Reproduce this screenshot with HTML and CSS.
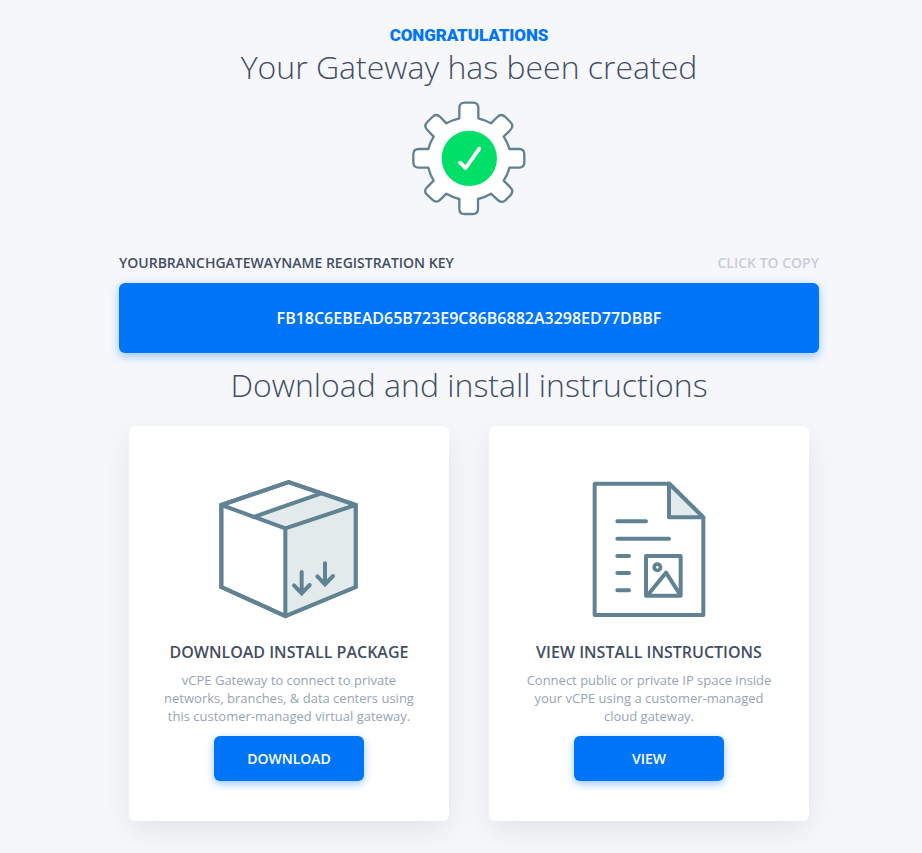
FILE: index.html
```html
<!DOCTYPE html>
<html lang="en">
<head>
<meta charset="utf-8">
<title>Gateway created</title>
<link rel="stylesheet" href="styles.css">
</head>
<body>
<main class="page">
  <p class="eyebrow">CONGRATULATIONS</p>
  <h1 class="title">Your Gateway has been created</h1>
  <svg class="gear" viewBox="0 0 390 375" aria-hidden="true">
    <path d="M166 70 V39 Q166 23 182 23 H207 Q223 23 223 39 V70 Q243 75 261 85 L280 66 Q292 54 304 66 L319 81 Q331 93 319 105 L299 125 Q311 142 316 162 H345 Q361 162 361 178 V202 Q361 218 345 218 H316 Q311 239 299 257 L319 277 Q331 289 319 301 L304 316 Q292 326 280 314 L261 296 Q243 307 222 312 V341 Q222 357 206 357 H182 Q166 357 166 341 V312 Q146 307 127 296 L109 314 Q97 326 85 314 L69 299 Q58 289 69 277 L89 257 Q78 239 73 218 H44 Q28 218 28 202 V178 Q28 162 44 162 H73 Q78 142 89 125 L70 105 Q58 93 70 81 L85 66 Q97 54 109 66 L127 85 Q145 75 166 70 Z" fill="#fff" stroke="#608292" stroke-width="7" stroke-linejoin="round"/>
    <circle cx="196" cy="190" r="83" fill="#00df67"/>
    <path d="M168 203 L185 219 L226 161" fill="none" stroke="#fff" stroke-width="11.5" stroke-linecap="round" stroke-linejoin="round"/>
  </svg>
  <div class="key-head">
    <span>YOURBRANCHGATEWAYNAME REGISTRATION KEY</span>
    <span class="copy">CLICK TO COPY</span>
  </div>
  <div class="key">FB18C6EBEAD65B723E9C86B6882A3298ED77DBBF</div>
  <h2 class="title subtitle">Download and install instructions</h2>
  <div class="cards">
    <section class="card">
      <svg class="art" viewBox="-3 0 480 465" aria-hidden="true">
        <g stroke="#608292" stroke-width="12" stroke-linejoin="miter" stroke-linecap="round">
          <path d="M34 105 L236 36 L437 105 V351 L226 438 L34 351 Z" fill="#fff"/>
          <path d="M130 141 L334 70 L437 105 V351 L226 438 V175 Z" fill="#e3eaeb" stroke="none"/>
          <path d="M34 105 L236 36 L437 105 V351 L226 438 L34 351 Z M34 105 L226 175 L437 105 M226 175 V438 M130 141 L334 70" fill="none"/>
          <path d="M275 306 V370 M252 346 L275 370 L299 345 M345 280 V343 M322 319 L345 343 L369 318" fill="none"/>
        </g>
      </svg>
      <h3 class="card-title">DOWNLOAD INSTALL PACKAGE</h3>
      <p class="card-text">vCPE Gateway to connect to private<br>networks, branches, &amp; data centers using<br>this customer-managed virtual gateway.</p>
      <button class="btn">DOWNLOAD</button>
    </section>
    <section class="card">
      <svg class="art" viewBox="-33 0 480 465" aria-hidden="true">
        <g stroke="#608292" stroke-width="12" stroke-linejoin="round" stroke-linecap="round" fill="none">
          <path d="M44 41 H268 L370 142 V435 H44 Z"/>
          <path d="M267 41 V142 H370 Z" fill="#e3eaeb"/>
          <path d="M112 154 H198 M112 206 H267 M112 258 H147 M112 309 H147 M112 361 H147"/>
          <path d="M198 258 H302 V377 H198 Z M203 375 L258 308 L301 375"/>
          <circle cx="232" cy="292" r="9.5" stroke-width="11"/>
        </g>
      </svg>
      <h3 class="card-title">VIEW INSTALL INSTRUCTIONS</h3>
      <p class="card-text">Connect public or private IP space inside<br>your vCPE using a customer-managed<br>cloud gateway.</p>
      <button class="btn">VIEW</button>
    </section>
  </div>
</main>
</body>
</html>
```
FILE: styles.css
```css
* { box-sizing: border-box; margin: 0; padding: 0; }
body {
  height: 853px;
  overflow: hidden;
  padding-left: 16px;
  background: #f5f7fb;
  color: #434e63;
  font-family: "Open Sans", sans-serif;
}
.page {
  display: flex;
  flex-direction: column;
  align-items: center;
  width: 700px;
  margin: 0 auto;
  padding-top: 25px;
}
.eyebrow {
  color: #0075f8;
  font: 900 17px/20px Roboto, sans-serif;
  letter-spacing: -0.1px;
}
.title {
  font-size: 32px;
  font-weight: 300;
  line-height: 44px;
  white-space: nowrap;
}
.gear { width: 130px; height: 125px; margin-top: 6px; }
.key-head {
  display: flex;
  justify-content: space-between;
  width: 100%;
  margin-top: 33px;
  font-size: 14px;
  font-weight: 600;
  line-height: 20px;
}
.copy { color: #c7cdd7; }
.key {
  width: 100%;
  height: 70px;
  margin-top: 10px;
  border-radius: 6px;
  background: #0075f8;
  box-shadow: 0 3px 10px rgba(0, 117, 248, 0.4);
  color: #fff;
  font-size: 16px;
  font-weight: 600;
  line-height: 70px;
  text-align: center;
}
.subtitle { margin-top: 10px; }
.cards { display: flex; gap: 40px; margin-top: 19px; }
.card {
  display: flex;
  flex-direction: column;
  align-items: center;
  width: 320px;
  height: 395px;
  padding-top: 44px;
  border-radius: 6px;
  background: #fff;
  box-shadow: 0 10px 30px rgba(0, 0, 0, 0.08);
  text-align: center;
}
.art { width: 160px; height: 155px; }
.card-title { margin-top: 16px; font-size: 16px; font-weight: 600; line-height: 22px; }
.card-text { margin-top: 8px; color: #98a3b5; font-size: 13px; line-height: 18px; white-space: nowrap; }
.btn {
  width: 150px;
  height: 45px;
  margin-top: 11px;
  border: 0;
  border-radius: 6px;
  background: #0075f8;
  box-shadow: 0 3px 8px rgba(0, 117, 248, 0.4);
  color: #fff;
  font: 600 14px/45px "Open Sans", sans-serif;
}
```
